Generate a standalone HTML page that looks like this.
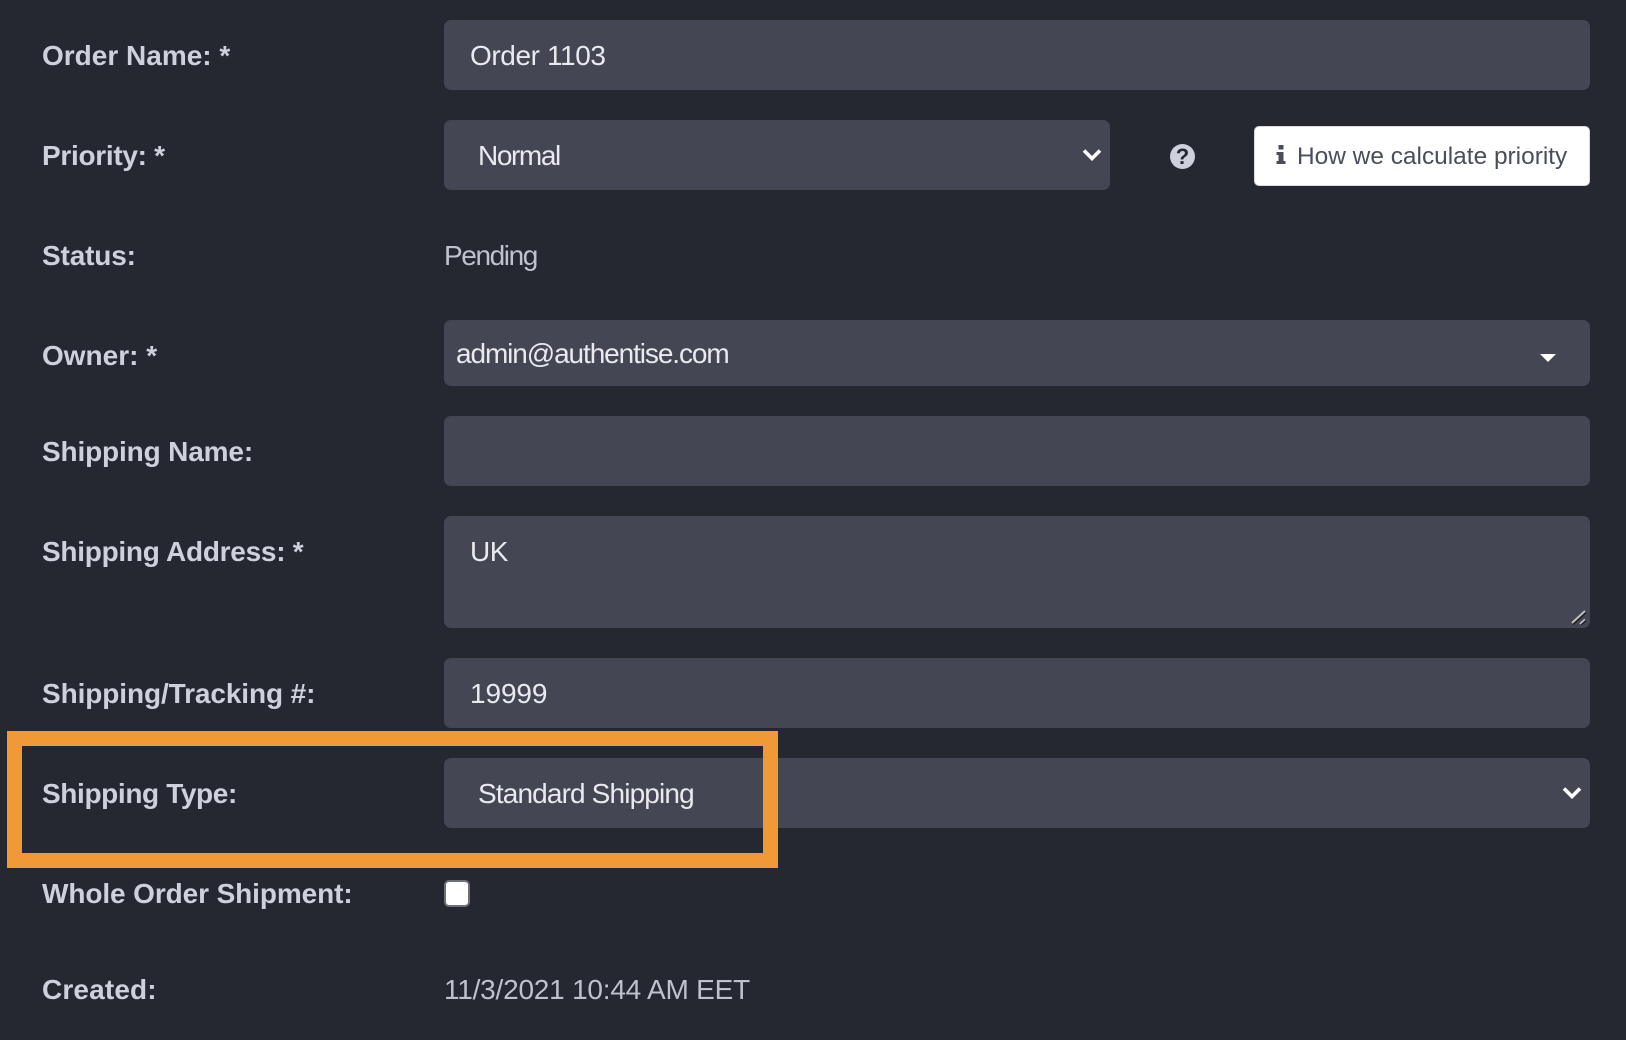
<!DOCTYPE html>
<html><head><meta charset="utf-8"><style>
html,body{margin:0;padding:0;background:#252830}
body{width:1626px;height:1040px;position:relative;overflow:hidden;font-family:"Liberation Sans",Arial,sans-serif}
.l,.t,.f,.btn,.box,svg{position:absolute}
.l{left:42px;font-weight:700;font-size:28px;line-height:36px;color:#ced1db;white-space:nowrap}
.f{left:444px;width:1146px;background:#444654;border-radius:7px}
.t{font-size:28px;line-height:36px;color:#e9eaef;white-space:nowrap;letter-spacing:-.5px}
.v{color:#bfc2cc}
.btn{left:1254px;top:126px;width:336px;height:60px;box-sizing:border-box;background:#fff;border:1px solid #d8dae0;border-radius:5px}
.btn span{position:absolute;left:42px;top:12px;font-size:24.45px;line-height:36px;color:#4a4e5c;white-space:nowrap}
.box{left:7px;top:731px;width:741px;height:107px;border:15px solid #f19937}
.cb{position:absolute;left:444px;top:880px;width:22px;height:23px;background:#fff;border:2px solid #6e7078;border-radius:5px}
.q{position:absolute;left:1170px;top:144px;width:25px;height:25px;border-radius:50%;background:#ced1db;color:#252830;font-weight:700;font-size:22px;line-height:25px;text-align:center}
</style></head><body>
<div class="l" style="top:38px">Order Name: *</div>
<div class="f" style="top:20px;height:70px"></div>
<div class="t" style="left:470px;top:38px;letter-spacing:-.4px">Order 1103</div>

<div class="l" style="top:138px;letter-spacing:-.3px">Priority: *</div>
<div class="f" style="top:120px;height:70px;width:666px"></div>
<div class="t" style="left:478px;top:138px;letter-spacing:-1.4px">Normal</div>
<svg style="left:1082px;top:148px" width="20" height="13" viewBox="0 0 20 13"><path d="M2 2.500l8 8 8-8" fill="none" stroke="#fff" stroke-width="3.600"/></svg>
<div class="q">?</div>
<div class="btn"><svg style="left:21px;top:18px" width="10" height="19" viewBox="0 0 10 19"><path d="M2.500 0h5v4.500h-5zM.5 7h7v9h2v3H.5v-3h2v-6h-2z" fill="#4a4e5c"/></svg><span>How we calculate priority</span></div>

<div class="l" style="top:238px;letter-spacing:-.15px">Status:</div>
<div class="t v" style="left:444px;top:238px;letter-spacing:-1.4px">Pending</div>

<div class="l" style="top:338px">Owner: *</div>
<div class="f" style="top:320px;height:66px"></div>
<div class="t" style="left:456px;top:336px;letter-spacing:-1.1px">admin@authentise.com</div>
<svg style="left:1540px;top:354px" width="16" height="8" viewBox="0 0 16 8"><path d="M0 0h16L8 8z" fill="#fff"/></svg>

<div class="l" style="top:434px;letter-spacing:-.15px">Shipping Name:</div>
<div class="f" style="top:416px;height:70px"></div>

<div class="l" style="top:534px;letter-spacing:-.27px">Shipping Address: *</div>
<div class="f" style="top:516px;height:112px"></div>
<div class="t" style="left:470px;top:534px">UK</div>
<svg style="left:1570px;top:609px" width="18" height="17" viewBox="0 0 18 17"><path d="M2 14L15 2M10 15l5-4.500" stroke="#c0c0c0" stroke-width="2" fill="none"/><path d="M3 15.500L16 3.500M11 16l5-4.500" stroke="#14161b" stroke-width="1.200" fill="none"/></svg>

<div class="l" style="top:676px;letter-spacing:-.1px">Shipping/Tracking #:</div>
<div class="f" style="top:658px;height:70px"></div>
<div class="t" style="left:470px;top:676px;letter-spacing:-.1px">19999</div>

<div class="l" style="top:776px;letter-spacing:-.37px">Shipping Type:</div>
<div class="f" style="top:758px;height:70px"></div>
<div class="t" style="left:478px;top:776px;letter-spacing:-.86px">Standard Shipping</div>
<svg style="left:1562px;top:786px" width="20" height="13" viewBox="0 0 20 13"><path d="M2 2.500l8 8 8-8" fill="none" stroke="#fff" stroke-width="3.600"/></svg>
<div class="box"></div>

<div class="l" style="top:876px;letter-spacing:-.1px">Whole Order Shipment:</div>
<div class="cb"></div>

<div class="l" style="top:972px;letter-spacing:.15px">Created:</div>
<div class="t v" style="left:444px;top:972px;letter-spacing:-.22px">11/3/2021 10:44 AM EET</div>
</body></html>
